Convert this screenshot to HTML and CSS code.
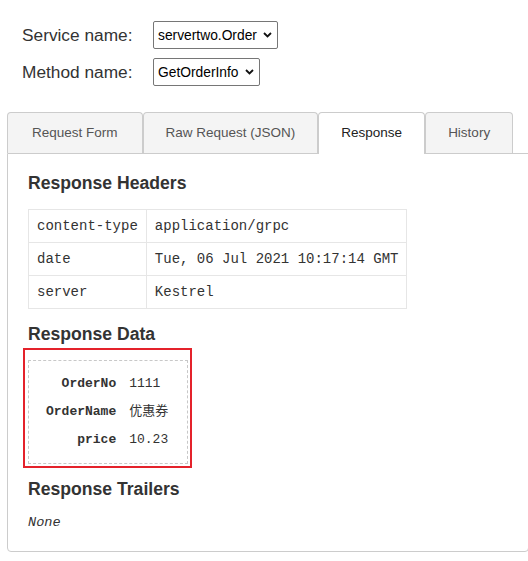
FILE: index.html
```html
<!DOCTYPE html>
<html lang="en">
<head>
<meta charset="utf-8">
<title>gRPC Response</title>
<link rel="stylesheet" href="styles.css">
</head>
<body>
<div class="page">
  <div class="selectors">
    <span class="label">Service name:</span>
    <div class="select">
      <span>servertwo.Order</span>
      <svg class="chevron" width="9" height="6" viewBox="0 0 9 6"><polyline points="1,1 4.5,4.5 8,1" fill="none" stroke="#111" stroke-width="1.8"/></svg>
    </div>
    <span class="label">Method name:</span>
    <div class="select">
      <span>GetOrderInfo</span>
      <svg class="chevron" width="9" height="6" viewBox="0 0 9 6"><polyline points="1,1 4.5,4.5 8,1" fill="none" stroke="#111" stroke-width="1.8"/></svg>
    </div>
  </div>

  <div class="tabs-area">
    <ul class="tabs">
      <li class="tab">Request Form</li>
      <li class="tab">Raw Request (JSON)</li>
      <li class="tab active">Response</li>
      <li class="tab">History</li>
    </ul>
    <div class="panel">
      <h3 class="heading first">Response Headers</h3>
      <table class="headers">
        <tr><td>content-type</td><td>application/grpc</td></tr>
        <tr><td>date</td><td>Tue, 06 Jul 2021 10:17:14 GMT</td></tr>
        <tr><td>server</td><td>Kestrel</td></tr>
      </table>

      <h3 class="heading">Response Data</h3>
      <div class="data-box">
        <table class="data">
          <tr><td class="key">OrderNo</td><td class="val">1111</td></tr>
          <tr><td class="key">OrderName</td><td class="val">优惠券</td></tr>
          <tr><td class="key">price</td><td class="val">10.23</td></tr>
        </table>
        <div class="highlight"></div>
      </div>

      <h3 class="heading">Response Trailers</h3>
      <div class="none">None</div>
    </div>
  </div>
</div>
</body>
</html>
```

FILE: styles.css
```css
html, body {
  margin: 0;
  padding: 0;
  overflow: hidden;
  background: #fff;
}

body {
  font-family: "Liberation Sans", Arial, sans-serif;
  color: #333;
}

.page {
  padding-top: 21px;
}

.selectors {
  display: grid;
  grid-template-columns: 131px auto;
  row-gap: 9px;
  align-items: center;
  justify-items: start;
  padding-left: 22px;
}

.label {
  font-size: 17.3px;
  color: #333;
}

.select {
  box-sizing: border-box;
  height: 28px;
  display: inline-flex;
  align-items: center;
  gap: 6px;
  padding: 0 5px 0 4px;
  border: 1px solid #767676;
  border-radius: 2px;
  font-size: 13.8px;
  color: #000;
  background: #fff;
}

.chevron {
  display: block;
  flex: none;
}

.tabs-area {
  margin: 26px -1px 0 7px;
}

.tabs {
  display: flex;
  list-style: none;
  margin: 0;
  padding: 0;
}

.tab {
  padding: 10px 22px;
  line-height: 20px;
  font-size: 13.5px;
  color: #555;
  background: #f4f4f4;
  border: 1px solid #ccc;
  border-bottom: none;
  border-radius: 4px 4px 0 0;
}

.tab:first-child {
  padding-left: 24px;
  padding-right: 24px;
}

.tab.active {
  background: #fff;
  color: #222;
  padding-bottom: 11px;
  margin-bottom: -1px;
  position: relative;
  z-index: 1;
}

.panel {
  border: 1px solid #ccc;
  border-radius: 0 0 4px 4px;
  padding: 19px 20px 20px;
}

.heading {
  font-size: 17.6px;
  line-height: 20px;
  font-weight: bold;
  color: #333;
  margin: 15px 0 16px;
}

.heading.first {
  margin-top: 0;
}

.headers {
  border-collapse: collapse;
  font-family: "Liberation Mono", "Courier New", monospace;
  font-size: 14px;
  line-height: 16px;
  color: #333;
}

.headers td {
  padding: 8px;
  border: 1px solid #e6e6e6;
  white-space: nowrap;
}

.data-box {
  position: relative;
  box-sizing: border-box;
  width: 160px;
  border: 1px dashed #c8c8c8;
  padding: 9px 0 9px 17px;
}

.data {
  border-collapse: collapse;
  font-family: "Liberation Mono", "Courier New", "Noto Sans CJK SC", monospace;
  font-size: 13px;
  color: #333;
}

.data td {
  padding: 0;
  height: 28px;
  line-height: 28px;
  white-space: nowrap;
}

.data .key {
  text-align: right;
  font-weight: bold;
  padding-right: 13px;
}

.data .val {
  color: #333;
}

.highlight {
  position: absolute;
  top: -13px;
  left: -6px;
  right: -5px;
  bottom: -5px;
  border: 2px solid #e4222b;
  pointer-events: none;
}

.none {
  font-family: "Liberation Mono", "Courier New", monospace;
  font-style: italic;
  font-size: 13.6px;
  line-height: 16px;
  color: #333;
}
```
